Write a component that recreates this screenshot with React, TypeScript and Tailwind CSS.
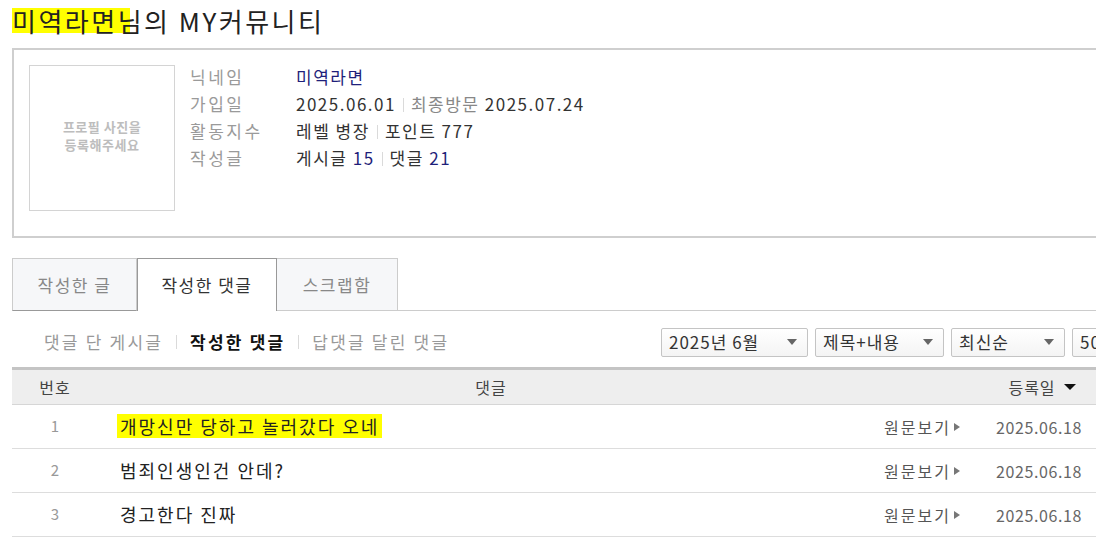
const font = "font-['Noto_Sans_CJK_KR','Noto_Sans',sans-serif]";

function Sep({ wide }: { wide?: boolean }) {
  return (
    <span
      className={`inline-block h-[14px] w-px bg-[#dadada] align-[-1px] ${wide ? "mx-[13px]" : "mx-[7px]"}`}
    />
  );
}

function Select({ label, width }: { label: string; width: string }) {
  return (
    <div
      className={`flex h-[29px] shrink-0 items-center justify-between rounded-[2px] border border-[#c4c4c4] bg-gradient-to-b from-white to-[#f4f4f4] pl-[7px] pr-[10px] text-[17px] tracking-[1px] text-[#333] ${width}`}
    >
      <span className="whitespace-nowrap">{label}</span>
      <span className="h-0 w-0 border-x-[5px] border-t-[6px] border-x-transparent border-t-[#666]" />
    </div>
  );
}

const rows = [
  { no: 1, text: "개망신만 당하고 놀러갔다 오네", hl: true },
  { no: 2, text: "범죄인생인건 안데?", hl: false },
  { no: 3, text: "경고한다 진짜", hl: false },
];

export default function App() {
  return (
    <div className={`h-[556px] w-[1096px] overflow-hidden bg-white ${font}`}>
      <div className="w-[1110px] pl-3">
        {/* title */}
        <div className="flex h-[48px] items-start pt-[8px] text-[26px] leading-[25px] tracking-[2.5px] text-[#222]">
          <span className="inline-block bg-[#ffff00]">미역라면</span>
          <span className="inline-block bg-[linear-gradient(to_right,#ffff00_45%,transparent_45%)]">님</span>
          <span className="inline-block">의 MY커뮤니티</span>
        </div>

        {/* profile box */}
        <div className="flex h-[190px] border-2 border-[#cfcfcf] p-[15px]">
          <div className="flex h-[146px] w-[146px] shrink-0 flex-col items-center justify-center border border-[#d4d4d4] pb-[5px] text-[13px] font-bold leading-[18px] tracking-[0.5px] text-[#bdbdbd]">
            <span>프로필 사진을</span>
            <span>등록해주세요</span>
          </div>
          <div className="ml-[15px] -mt-[2px] grid grid-cols-[106px_auto] content-start text-[17px] leading-[27px]">
            <span className="tracking-[2.5px] text-[#9a9a9a]">닉네임</span>
            <span className="tracking-[1.5px] text-[#1f1f7a]">미역라면</span>
            <span className="tracking-[2.5px] text-[#9a9a9a]">가입일</span>
            <span className="tracking-[1.5px] text-[#333]">
              2025.06.01
              <Sep />
              <span className="text-[#888]">최종방문</span> 2025.07.24
            </span>
            <span className="tracking-[2.5px] text-[#9a9a9a]">활동지수</span>
            <span className="tracking-[1.5px] text-[#333]">
              레벨 병장
              <Sep />
              포인트 777
            </span>
            <span className="tracking-[2.5px] text-[#9a9a9a]">작성글</span>
            <span className="tracking-[1.5px] text-[#333]">
              게시글 <span className="text-[#1f1f7a]">15</span>
              <Sep />
              댓글 <span className="text-[#1f1f7a]">21</span>
            </span>
          </div>
        </div>

        {/* tabs */}
        <div className="mt-[20px] flex h-[53px] items-stretch text-[17px] tracking-[1.5px]">
          <div className="flex w-[125px] items-center justify-center border border-[#cccccc] border-b-[#999] bg-[#f6f7f9] text-[#888]">
            작성한 글
          </div>
          <div className="flex w-[140px] items-center justify-center border border-b-0 border-[#999] bg-white text-[#333]">
            작성한 댓글
          </div>
          <div className="flex w-[121px] items-center justify-center border border-l-0 border-[#cccccc] bg-[#f6f7f9] text-[#888]">
            스크랩함
          </div>
          <div className="flex-1 border-b border-[#ccc]" />
        </div>

        {/* filter row */}
        <div className="flex h-[56px] items-center pt-[6px]">
          <div className="ml-[32px] flex items-center text-[17px] tracking-[2.2px] text-[#999]">
            <span>댓글 단 게시글</span>
            <Sep wide />
            <span className="font-bold text-[#111]">작성한 댓글</span>
            <Sep wide />
            <span>답댓글 달린 댓글</span>
          </div>
          <div className="ml-auto flex w-[449px] shrink-0 gap-[7px]">
            <Select label="2025년 6월" width="w-[147px]" />
            <Select label="제목+내용" width="w-[129px]" />
            <Select label="최신순" width="w-[114px]" />
            <Select label="50개씩" width="w-[100px]" />
          </div>
        </div>

        {/* table */}
        <div className="border-t-[3px] border-[#c4c4c4]">
          <div className="flex h-[35px] items-center border-b border-[#d6d6d6] bg-[#eeeeee] text-[16px] tracking-[1px] text-[#444]">
            <div className="w-[86px] text-center">번호</div>
            <div className="w-[786px] text-center">댓글</div>
            <div className="w-[96px]" />
            <div className="flex w-[124px] items-center justify-center gap-[8px]">
              등록일
              <span className="h-0 w-0 border-x-[6px] border-t-[6px] border-x-transparent border-t-[#111]" />
            </div>
          </div>
          {rows.map((r) => (
            <div key={r.no} className="flex h-[44px] items-center border-b border-[#dddddd]">
              <div className="w-[86px] text-center text-[15px] text-[#999]">{r.no}</div>
              <div className="w-[786px] pl-[19px] text-[18px] tracking-[2px] text-[#222]">
                <span className={`inline-block px-[3px] leading-[24px] ${r.hl ? "bg-[#ffff00]" : ""}`}>{r.text}</span>
              </div>
              <div className="flex w-[96px] items-center text-[16px] tracking-[2px] text-[#555]">
                원문보기
                <span className="ml-[3px] h-0 w-0 border-y-[4px] border-l-[6px] border-y-transparent border-l-[#777]" />
              </div>
              <div className="w-[124px] pr-[6px] text-center text-[16px] tracking-[0.6px] text-[#666]">2025.06.18</div>
            </div>
          ))}
        </div>
      </div>
    </div>
  );
}
